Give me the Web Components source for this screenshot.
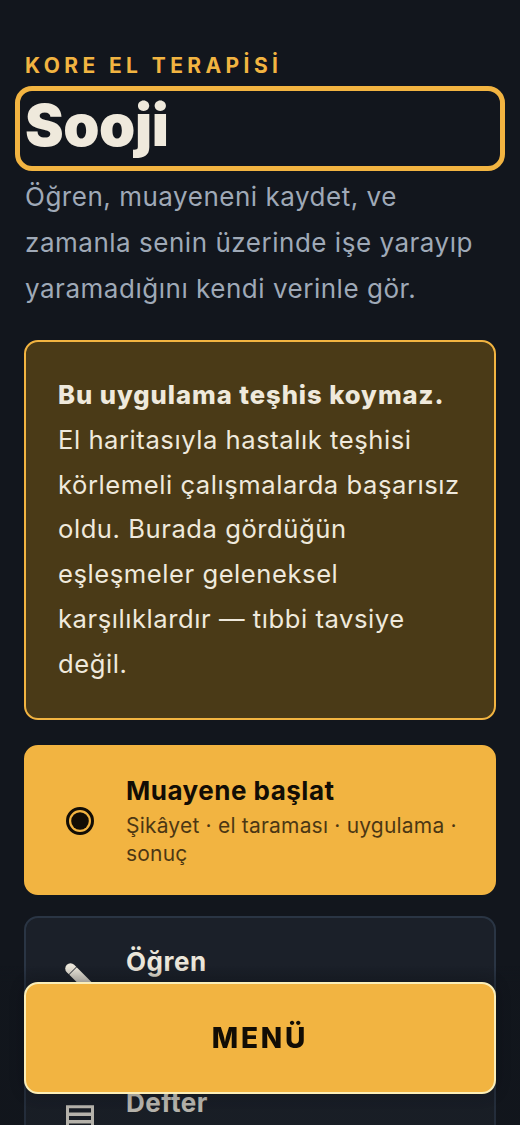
<!DOCTYPE html>
<html lang="tr">
<head>
<meta charset="utf-8">
<title>Sooji</title>
<style>
  html, body { margin: 0; height: 100%; background: #12161d; }
  body { font-family: Inter, "Noto Sans", sans-serif; color: #efe9dc; overflow: hidden; }
</style>
</head>
<body>
<app-shell>
  <app-header eyebrow="KORE EL TERAPİSİ" title="Sooji">Öğren, muayeneni kaydet, ve zamanla senin üzerinde işe yarayıp yaramadığını kendi verinle gör.</app-header>
  <warning-box heading="Bu uygulama teşhis koymaz.">El haritasıyla hastalık teşhisi körlemeli çalışmalarda başarısız oldu. Burada gördüğün eşleşmeler geleneksel karşılıklardır — tıbbi tavsiye değil.</warning-box>
  <menu-card primary icon="target" title="Muayene başlat">Şikâyet · el taraması · uygulama · sonuç</menu-card>
  <menu-card icon="pencil" title="Öğren"></menu-card>
  <menu-card icon="list" title="Defter"></menu-card>
</app-shell>
<menu-button>MENÜ</menu-button>

<script>
class AppShell extends HTMLElement {
  connectedCallback() {
    this.attachShadow({ mode: 'open' });
    this.shadowRoot.innerHTML = `
      <style>
        :host { display: flex; flex-direction: column; gap: 21px; padding: 51px 24px 0; }
      </style>
      <slot></slot>`;
  }
}

class AppHeader extends HTMLElement {
  connectedCallback() {
    this.attachShadow({ mode: 'open' });
    this.shadowRoot.innerHTML = `
      <style>
        :host { display: block; margin-bottom: 7px; }
        .eyebrow { font-size: 21px; line-height: 30px; font-weight: 700; letter-spacing: 4.4px; color: #f2b441; padding-left: 1px; }
        h1 {
          margin: 13.5px 0 0; height: 67.5px; font-size: 58px; line-height: 61px; font-weight: 900;
          letter-spacing: -.4px; padding-left: 1px; box-sizing: border-box; color: #efe9dc;
          outline: 5px solid #f2b441; outline-offset: 4px; border-radius: 8px;
        }
        p { margin: 12px 0 0; font-size: 26px; line-height: 46px; letter-spacing: .52px; color: #9fa9b7; padding-left: 1px; }
      </style>
      <div class="eyebrow">${this.getAttribute('eyebrow')}</div>
      <h1>${this.getAttribute('title')}</h1>
      <p><slot></slot></p>`;
  }
}

class WarningBox extends HTMLElement {
  connectedCallback() {
    this.attachShadow({ mode: 'open' });
    this.shadowRoot.innerHTML = `
      <style>
        :host {
          display: block; margin-bottom: 4px; padding: 31px 32px; font-size: 25.6px; line-height: 44.8px; letter-spacing: .55px;
          background: #4a3a17; border: 2px solid #f2b441; border-radius: 14px; color: #efe9dc;
        }
        strong { display: block; font-weight: 800; letter-spacing: .95px; }
      </style>
      <strong>${this.getAttribute('heading')}</strong>
      <slot></slot>`;
  }
}

const ICONS = {
  target: `<circle cx="15" cy="15" r="12.500" fill="none" stroke="currentColor" stroke-width="3"/><circle cx="15" cy="15" r="8.800" fill="currentColor"/>`,
  pencil: `<path d="M5.500 5.500 25 25" fill="none" stroke="currentColor" stroke-width="10.500" stroke-linecap="round"/><path d="M3.500 12 12 3.500" fill="none" stroke="#1b2029" stroke-width="1"/>`,
  list: `<rect x="2.500" y="2.750" width="25" height="27" fill="none" stroke="currentColor" stroke-width="3"/><path d="M2 10.250h26M2 17.750h26M2 25.250h26" fill="none" stroke="currentColor" stroke-width="3.500"/>`
};

class MenuCard extends HTMLElement {
  connectedCallback() {
    this.attachShadow({ mode: 'open' });
    this.shadowRoot.innerHTML = `
      <style>
        :host {
          display: grid; grid-template-columns: 30px 1fr; column-gap: 31px; align-items: center;
          padding: 28px 24px 23px 39px; background: #1b2029; border: 2px solid #2a3544; border-radius: 14px; color: #ebe6da;
        }
        :host([primary]) { padding-bottom: 25px; background: #f2b441; border-color: #f2b441; color: #120d05; }
        svg { width: 30px; height: 30px; display: block; }
        h2 { margin: 0; font-size: 26px; line-height: 32px; font-weight: 700; letter-spacing: .5px; }
        p { margin: 5px 0 0; min-height: 28px; font-size: 21px; line-height: 28px; letter-spacing: .2px; opacity: .75; }
      </style>
      <svg viewBox="0 0 30 30">${ICONS[this.getAttribute('icon')]}</svg>
      <div><h2>${this.getAttribute('title')}</h2><p><slot></slot></p></div>`;
  }
}

class MenuButton extends HTMLElement {
  connectedCallback() {
    this.attachShadow({ mode: 'open' });
    this.shadowRoot.innerHTML = `
      <style>
        :host {
          position: fixed; left: 0; right: 0; bottom: 0; display: block; padding: 16px 24px 31px;
          background: linear-gradient(to bottom, rgba(18,22,29,0), rgba(18,22,29,.25) 16px);
        }
        .btn {
          height: 108px; display: flex; align-items: center; justify-content: center;
          background: #f2b441; border: 2px solid #fbeeb8; border-radius: 14px;
          box-shadow: 0 0 16px rgba(0,0,0,.2);
          color: #120d05; font-size: 28px; font-weight: 800; letter-spacing: 2.8px;
        }
      </style>
      <div class="btn"><slot></slot></div>`;
  }
}

customElements.define('app-shell', AppShell);
customElements.define('app-header', AppHeader);
customElements.define('warning-box', WarningBox);
customElements.define('menu-card', MenuCard);
customElements.define('menu-button', MenuButton);
</script>
</body>
</html>
